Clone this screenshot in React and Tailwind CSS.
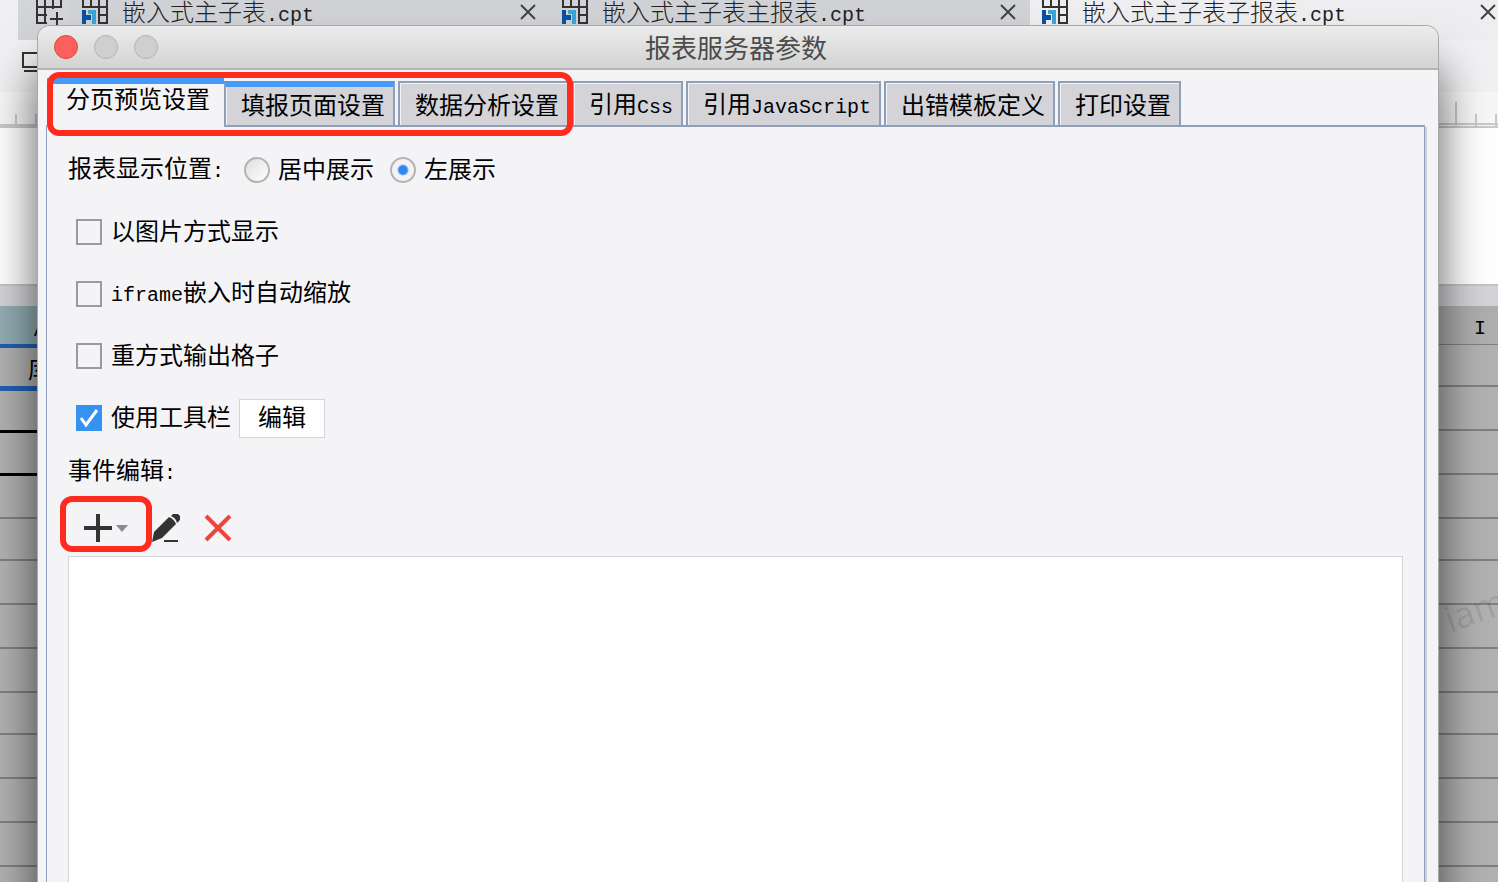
import { Fragment, useState } from "react";

const FILES = [
  { name: "嵌入式主子表.cpt", active: false },
  { name: "嵌入式主子表主报表.cpt", active: false },
  { name: "嵌入式主子表子报表.cpt", active: true },
];

const MARKED_TABS = ["分页预览设置", "填报页面设置", "数据分析设置"];
const OTHER_TABS = ["引用Css", "引用JavaScript", "出错模板定义", "打印设置"];

const OPTIONS = [
  { id: "image", label: "以图片方式显示", checked: false },
  { id: "iframe", label: "iframe嵌入时自动缩放", checked: false },
  { id: "heavy", label: "重方式输出格子", checked: false },
  { id: "toolbar", label: "使用工具栏", checked: true },
];

const ROWS = [1, 2, 3, 4, 5, 6, 7, 8, 9, 10, 11, 12];

// Latin runs are set smaller so each letter is half as wide as a Chinese one
function Mixed({ text }) {
  return text.split(/([A-Za-z.:]+)/).map((part, i) =>
    i % 2 ? (
      <span key={i} className="font-['Liberation_Mono','Noto_Sans_CJK_SC',monospace] text-xl leading-5">
        {part}
      </span>
    ) : (
      <Fragment key={i}>{part}</Fragment>
    )
  );
}

function ReportIcon() {
  return (
    <svg width="26" height="24" viewBox="0 0 26 24" className="shrink-0" aria-hidden="true">
      <path d="M1 0V7H25M9 0V7M17 0V23H25V0M17 15H25" fill="none" stroke="#333" strokeWidth="2" />
      <path d="M0 10h4v5h5v5H4v4H0z" fill="#0a519c" />
      <path d="M6 10h8v14h-4V14H6z" fill="#38a4dc" />
    </svg>
  );
}

function NewSheetIcon() {
  return (
    <svg width="28" height="26" viewBox="0 0 28 26" className="shrink-0" aria-hidden="true">
      <path d="M1 0V23H11M1 7H25V0M9 0V23M17 0V9M1 15H11M14 19H27M21 12V26" fill="none" stroke="#333" strokeWidth="2" />
    </svg>
  );
}

function CloseIcon() {
  return (
    <svg width="16" height="16" viewBox="0 0 16 16" aria-hidden="true">
      <path d="M1 1L15 15M15 1L1 15" stroke="#444" strokeWidth="2" />
    </svg>
  );
}

function Ruler() {
  return (
    <div className="flex h-9 shrink-0 items-end justify-between border-b-2 border-[#c8c9cb] bg-[#f7f7f8]">
      <svg width="60" height="34" aria-hidden="true">
        <path d="M16 22V34M36 22V34M0 33H60" fill="none" stroke="#c8c9cb" strokeWidth="2" />
      </svg>
      <svg width="60" height="34" aria-hidden="true">
        <path d="M18 10V34M38 22V34M58 22V34M0 32H60" fill="none" stroke="#c8c9cb" strokeWidth="2" />
      </svg>
    </div>
  );
}

function Sheet() {
  return (
    <div className="flex justify-between bg-[#b2b2b2] font-normal">
      <div className="w-20">
        <div className="h-[42px] border-b-4 border-[#2360b0] bg-[#93aeb4] text-center leading-10">
          <Mixed text="A" />
        </div>
        <div className="h-[43px] border-b-5 border-[#2360b0] pl-7 leading-10">库</div>
        <div className="h-[42px] border-b-3 border-black" />
        <div className="h-[43px] border-b-3 border-black" />
        <div className="h-[43px] border-b-2 border-[#808080]" />
        {ROWS.slice(3).map((row) => (
          <div key={row} className={`border-b-2 border-[#808080] ${row % 4 ? "h-11" : "h-[42px]"}`} />
        ))}
      </div>
      <div className="w-20">
        <div className="h-[39px] border-b border-[#808080] bg-[#aeaeae] pl-14 leading-9">
          <Mixed text="I" />
        </div>
        <div className="h-[42px] border-b-2 border-[#808080]" />
        {ROWS.map((row) => (
          <div key={row} className={`border-b-2 border-[#808080] ${row % 4 ? "h-11" : "h-[42px]"}`} />
        ))}
      </div>
    </div>
  );
}

function Workbook() {
  return (
    <div className="flex h-full flex-col font-light">
      <div className="flex h-10 shrink-0 bg-[#f0f0f2] pl-[18px]">
        <div className="flex w-[52px] shrink-0 items-start bg-[#d3d4d7] pl-[18px]">
          <NewSheetIcon />
        </div>
        {FILES.map((file) => (
          <div
            key={file.name}
            className={`flex w-[480px] shrink-0 items-start pr-[14px] pl-3 last:w-auto last:flex-1 last:pr-[2px] ${
              file.active ? "bg-[#eeeef0]" : "bg-[#d1d2d5]"
            }`}
          >
            <ReportIcon />
            <span className="ml-[14px] flex-1 leading-[22px] whitespace-nowrap text-[#222]">
              <Mixed text={file.name} />
            </span>
            <button type="button" tabIndex={-1} aria-label="关闭文件" className="pt-1">
              <CloseIcon />
            </button>
          </div>
        ))}
      </div>
      <div className="flex h-[52px] shrink-0 items-start bg-[#f1f1f3] pt-3 pl-[22px]">
        <svg width="28" height="20" viewBox="0 0 28 20" aria-hidden="true">
          <path d="M1 1H27V15H1zM2 19H26" fill="none" stroke="#333" strokeWidth="2" />
        </svg>
      </div>
      <Ruler />
      <div className="h-[156px] shrink-0 bg-white" />
      <div className="h-[22px] shrink-0 border-t-2 border-[#c4c4c5] bg-[#d4d4d8]" />
      <Sheet />
    </div>
  );
}

function Tab({ label, selected, hovered, onSelect }) {
  let look = "mt-[3px] border-2 border-[#8f9fb8] bg-[#d4d3d8] pr-2 pl-[15px] shadow-[inset_1px_1px_0_#f4f4f7]";
  if (hovered) {
    look =
      "mt-[3px] border-2 border-t-[6px] border-[#8f9fb8] border-t-[#449cf8] bg-[#d4d3d8] pr-2 pb-1 pl-[15px] shadow-[inset_1px_0_0_#f4f4f7]";
  }
  if (selected) {
    look = "-mr-[3px] border-t-[6px] border-t-[#449cf8] bg-[#f4f4f7] pr-[14px] pb-4 pl-[19px]";
  }
  return (
    <button
      type="button"
      role="tab"
      aria-selected={selected}
      onClick={onSelect}
      className={`flex items-center leading-6 whitespace-nowrap ${look}`}
    >
      <span>
        <Mixed text={label} />
      </span>
    </button>
  );
}

function Radio({ id, label, value, onChange }) {
  return (
    <label className="flex items-center gap-2">
      <input
        type="radio"
        name="position"
        checked={value === id}
        onChange={() => onChange(id)}
        className="size-[26px] appearance-none rounded-full border-2 border-[#b4b4b4] bg-linear-to-br from-[#dedede] to-white checked:bg-[radial-gradient(circle,#2f86ee_0_4px,#8dbcf6_5px,#f2f2f4_6px)]"
      />
      <span className="pb-1">{label}</span>
    </label>
  );
}

function Check({ label, defaultChecked }) {
  return (
    <label className="flex items-center gap-[9px]">
      <span className="relative flex size-[26px]">
        <input
          type="checkbox"
          defaultChecked={defaultChecked}
          className="peer size-[26px] appearance-none border-2 border-[#9b9b9b] checked:border-[#3592ee] checked:bg-[#3592ee]"
        />
        <svg
          viewBox="0 0 26 26"
          className="pointer-events-none absolute inset-0 hidden peer-checked:block"
          aria-hidden="true"
        >
          <path d="M5 13L10 20L21 5" fill="none" stroke="#fff" strokeWidth="3" />
        </svg>
      </span>
      <span className="pb-1">
        <Mixed text={label} />
      </span>
    </label>
  );
}

function EventToolbar() {
  return (
    <div className="flex h-[61px] shrink-0 items-center pt-1 pl-4">
      <div className="relative">
        <button type="button" aria-label="添加事件" className="flex items-center gap-1">
          <svg width="28" height="28" viewBox="0 0 28 28" aria-hidden="true">
            <path d="M14 0V28M0 14H28" stroke="#333" strokeWidth="4" />
          </svg>
          <svg width="12" height="8" viewBox="0 0 12 8" aria-hidden="true">
            <path d="M0 1H12L6 8z" fill="#8a8a8a" />
          </svg>
        </button>
        <div className="pointer-events-none absolute -top-[18px] -right-6 -bottom-[10px] -left-6 rounded-xl border-6 border-[#ff2b1f]" />
      </div>
      <button type="button" aria-label="编辑事件" className="ml-6">
        <svg width="28" height="28" viewBox="0 0 28 28" aria-hidden="true">
          <path d="M0 28L2 18L17 3Q22 5 24 10L10 24z" fill="#333" />
          <path d="M19 2L21 0H26L28 2V6L25 9Q24 4 19 2z" fill="#333" />
          <path d="M12 27H26" stroke="#333" strokeWidth="2" />
        </svg>
      </button>
      <button type="button" aria-label="删除事件" className="ml-6">
        <svg width="28" height="28" viewBox="0 0 28 28" aria-hidden="true">
          <path d="M2 2L26 26M26 2L2 26" stroke="#ee443e" strokeWidth="4" />
        </svg>
      </button>
    </div>
  );
}

function ServerDialog() {
  const [tab, setTab] = useState("分页预览设置");
  const [position, setPosition] = useState("left");

  return (
    <div
      role="dialog"
      aria-labelledby="dialog-title"
      className="absolute top-[26px] right-[60px] -bottom-20 left-[38px] flex flex-col rounded-t-xl bg-[#f4f4f7] shadow-[0_0_0_1px_#a8a8a8,0_40px_50px_rgba(0,0,0,0.5),0_50px_40px_rgba(0,0,0,0.2)]"
    >
      <header className="grid h-11 shrink-0 grid-cols-[1fr_auto_1fr] items-center rounded-t-xl border-b-2 border-[#b4b4b4] bg-linear-to-b from-[#ececec] to-[#d3d3d3] pr-5 pl-4">
        <div className="flex gap-4">
          <button type="button" aria-label="关闭" className="size-6 rounded-full border border-[#e2463f] bg-[#fc605c]" />
          <button type="button" aria-label="最小化" className="size-6 rounded-full border border-[#b4b4b4] bg-[#cfcfcf]" />
          <button type="button" aria-label="最大化" className="size-6 rounded-full border border-[#b4b4b4] bg-[#cfcfcf]" />
        </div>
        <h1 id="dialog-title" className="text-[26px] leading-8 text-[#4c4c4c]">
          报表服务器参数
        </h1>
      </header>

      <div role="tablist" className="z-10 mr-[13px] ml-[9px] flex h-[57px] shrink-0 gap-[3px] pt-2">
        <div className="relative flex gap-[3px]">
          {MARKED_TABS.map((label, i) => (
            <Tab key={label} label={label} selected={tab === label} hovered={i === 1} onSelect={() => setTab(label)} />
          ))}
          <div className="pointer-events-none absolute -top-[6px] -right-1 -bottom-[9px] left-0 rounded-xl border-6 border-[#ff2b1f]" />
        </div>
        {OTHER_TABS.map((label) => (
          <Tab key={label} label={label} selected={tab === label} onSelect={() => setTab(label)} />
        ))}
      </div>

      <div className="-mt-[2px] mr-[13px] ml-2 flex min-h-0 flex-1 flex-col border-x border-[#8f9fc0] shadow-[2px_2px_0_#cfcfd3]">
        <div className="ml-[177px] h-[2px] shrink-0 bg-[#8f9fb8]" />
        <div className="flex min-h-0 flex-1 flex-col px-[21px] pt-3">
          <div role="radiogroup" aria-labelledby="position-label" className="flex h-[62px] shrink-0 items-center">
            <span id="position-label" className="mr-5 pb-1">
              <Mixed text="报表显示位置:" />
            </span>
            <div className="flex gap-4">
              <Radio id="center" label="居中展示" value={position} onChange={setPosition} />
              <Radio id="left" label="左展示" value={position} onChange={setPosition} />
            </div>
          </div>
          {OPTIONS.map((option) => (
            <div key={option.id} className="flex h-[62px] shrink-0 items-center gap-2 pl-2">
              <Check label={option.label} defaultChecked={option.checked} />
              {option.id === "toolbar" && (
                <button type="button" className="h-[39px] border border-[#d4d5d9] bg-white px-[18px] pb-1">
                  编辑
                </button>
              )}
            </div>
          ))}
          <p className="flex h-[46px] shrink-0 items-center">
            <span className="pb-1">
              <Mixed text="事件编辑:" />
            </span>
          </p>
          <EventToolbar />
          <div className="flex-1 border border-[#d4d5d9] bg-white" />
        </div>
      </div>
    </div>
  );
}

export default function App() {
  return (
    <main className="relative h-screen overflow-hidden bg-[#b2b2b2] font-['Noto_Sans_CJK_SC',sans-serif] text-2xl leading-6 text-black">
      <Workbook />
      <div className="pointer-events-none absolute top-[590px] -right-2 -rotate-20 font-['Open_Sans',sans-serif] text-4xl text-black/10">
        iam
      </div>
      <ServerDialog />
    </main>
  );
}
